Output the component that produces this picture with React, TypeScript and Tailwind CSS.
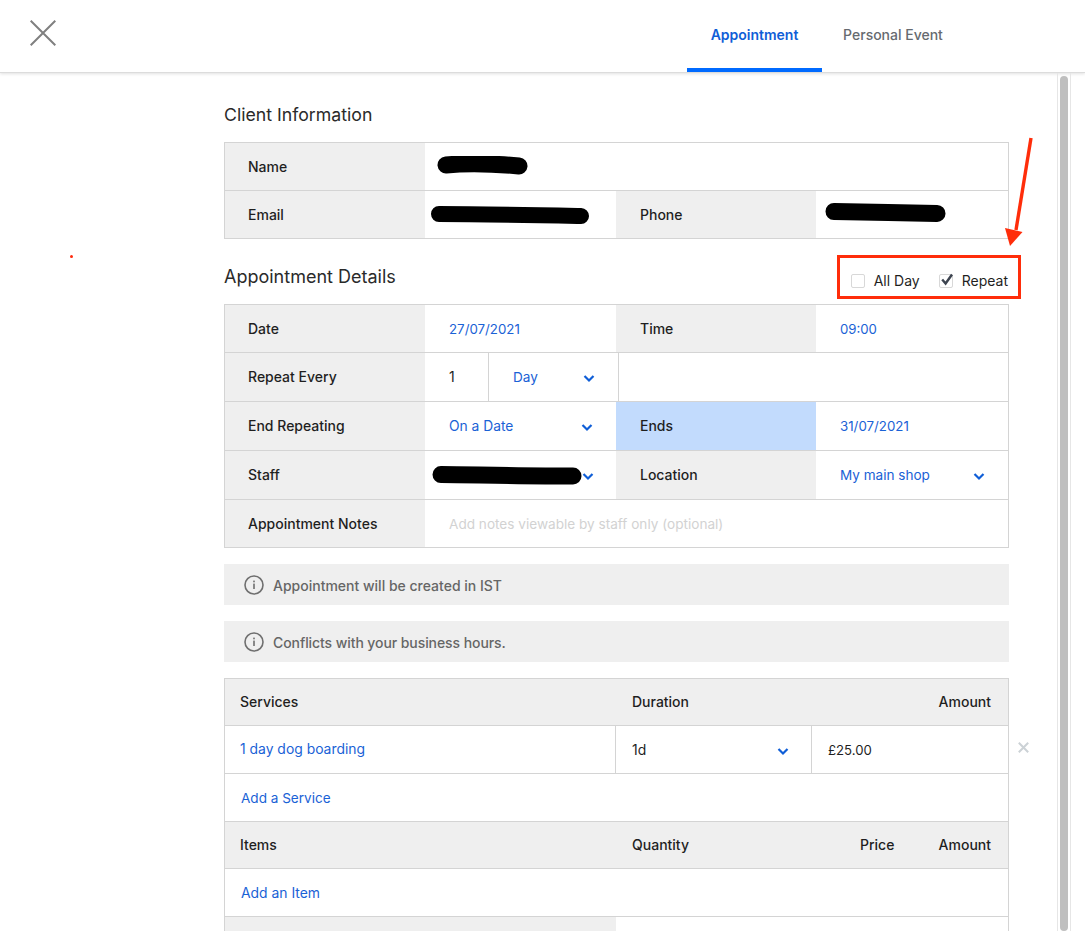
import React from "react";

const Chevron = () => (
  <svg width="12" height="8" viewBox="0 0 12 8" fill="none" className="shrink-0 translate-y-[1.5px]">
    <path d="M1.5 1.5 L6 6 L10.5 1.5" stroke="#0f5ed7" strokeWidth="2.2" />
  </svg>
);

const Label = ({ children, className = "" }: { children: React.ReactNode; className?: string }) => (
  <div className={`flex items-center bg-[#efefef] pl-[23px] font-medium text-[#1f1f1f] ${className}`}>{children}</div>
);

const Value = ({ children, className = "" }: { children: React.ReactNode; className?: string }) => (
  <div className={`flex items-center pl-6 text-[#1a62d6] ${className}`}>{children}</div>
);

const Redact = ({ w, h, d, className = "" }: { w: number; h: number; d: string; className?: string }) => (
  <svg width={w} height={h} viewBox={`0 0 ${w} ${h}`} fill="none" className={`shrink-0 ${className}`}>
    <path d={d} stroke="#000" strokeWidth={h - 2} strokeLinecap="round" />
  </svg>
);

const Info = () => (
  <svg width="20" height="20" viewBox="0 0 20 20" fill="none" className="shrink-0">
    <circle cx="10" cy="10" r="9" stroke="#6f6f6f" strokeWidth="1.6" />
    <rect x="9.2" y="8.6" width="1.6" height="5.4" fill="#6f6f6f" />
    <rect x="9.2" y="5.6" width="1.6" height="1.7" fill="#6f6f6f" />
  </svg>
);

const Banner = ({ children, className = "" }: { children: React.ReactNode; className?: string }) => (
  <div className="flex h-[41px] items-center gap-[9px] bg-[#efefef] pl-5 font-medium text-[#666666]">
    <Info />
    <span className={`pt-0.5 ${className}`}>{children}</span>
  </div>
);

const Rule = "border-b border-[#d4d4d4]";

export default function App() {
  return (
    <div
      className="relative h-[931px] w-[1085px] overflow-hidden bg-white text-[14px] text-[#1f1f1f]"
      style={{ fontFamily: 'Inter, "Liberation Sans", sans-serif' }}
    >
      <header className="flex h-[73px] items-stretch border-b border-[#dcdcdc] shadow-[0_1px_3px_rgba(0,0,0,0.12)]">
        <div className="flex w-[687px] items-start pl-[30px] pt-[20px]">
          <svg width="26" height="26" viewBox="0 0 26 26" fill="none">
            <path d="M0.7 0.7 L25.3 25.3 M25.3 0.7 L0.7 25.3" stroke="#808080" strokeWidth="2" />
          </svg>
        </div>
        <div className="flex h-[72px] w-[135px] items-center justify-center border-b-4 border-[#006aff] font-semibold text-[#0f5ed7]">
          Appointment
        </div>
        <div className="flex h-[68px] w-[142px] items-center justify-center font-medium text-[#666a70]">
          Personal Event
        </div>
      </header>

      <div className="flex h-[858px]">
        <main className="ml-[224px] w-[785px] shrink-0">
          <h2 className="flex h-[69px] items-end pb-[15px] text-[17.7px] leading-6 text-[#2a2a2a]">Client Information</h2>
          <div className="border border-[#d4d4d4]">
            <div className={`grid h-[48px] grid-cols-[200px_1fr] ${Rule}`}>
              <Label>Name</Label>
              <Value className="pl-[12px]">
                <Redact w={91} h={19} d="M9 9 C 30 7, 60 8, 82 10" className="mb-[2px]" />
              </Value>
            </div>
            <div className="grid h-[47px] grid-cols-[200px_191px_200px_1fr]">
              <Label>Email</Label>
              <Value className="pl-[5px]">
                <Redact w={160} h={18} d="M9 8 C 50 8, 100 9, 151 10" />
              </Value>
              <Label className="pl-[24px]">Phone</Label>
              <Value className="pl-[9px]">
                <Redact w={121} h={19} d="M9 8.5 C 40 9, 80 10, 112 10.5" className="mb-[4px]" />
              </Value>
            </div>
          </div>

          <div className="flex h-[65px] items-end justify-between pb-[15px]">
            <h2 className="text-[18px] leading-6 text-[#2a2a2a]">Appointment Details</h2>
            <div className="-mb-[2px] mr-px flex items-center">
              <span className="mr-[9px] h-[14px] w-[14px] rounded-[2px] border border-[#d8d8d8]" />
              <span className="mr-[19px]">All Day</span>
              <span className="relative mr-[9px] h-[14px] w-[14px] rounded-[2px] border border-[#d8d8d8]">
                <svg width="14" height="15" viewBox="0 0 14 15" fill="none" className="absolute -top-[3px] left-0">
                  <path d="M2.2 7.5 L5.6 11.5 L12 2.5" stroke="#3d4450" strokeWidth="2.4" />
                </svg>
              </span>
              <span>Repeat</span>
            </div>
          </div>

          <div className="border border-[#d4d4d4]">
            <div className={`grid h-[48px] grid-cols-[200px_191px_200px_1fr] ${Rule}`}>
              <Label>Date</Label>
              <Value className="pt-0.5 text-[13.3px]">27/07/2021</Value>
              <Label className="pl-[24px]">Time</Label>
              <Value className="pt-0.5 text-[13.2px]">09:00</Value>
            </div>
            <div className={`grid h-[49px] grid-cols-[200px_64px_130px_1fr] ${Rule}`}>
              <Label className="pb-0.5">Repeat Every</Label>
              <div className="flex items-center border-r border-[#d4d4d4] pb-0.5 pl-6">1</div>
              <div className="flex items-center justify-between border-r border-[#d4d4d4] pl-6 pr-[23px] text-[13.6px] text-[#1a62d6]">
                Day <Chevron />
              </div>
              <div />
            </div>
            <div className="grid h-[49px] grid-cols-[200px_191px_200px_1fr] border-b border-[#d4d4d4]">
              <Label className="pb-0.5">End Repeating</Label>
              <Value className="justify-between pr-[23px] text-[13.8px]">
                On a Date <Chevron />
              </Value>
              <Label className="!bg-[#c2dbfd] pb-0.5 pl-[24px]">Ends</Label>
              <Value className="pt-0.5 text-[13.3px]">31/07/2021</Value>
            </div>
            <div className={`grid h-[49px] grid-cols-[200px_191px_200px_1fr] ${Rule}`}>
              <Label className="pb-0.5">Staff</Label>
              <Value className="justify-between pl-[7px] pr-[23px]">
                <Redact w={150} h={19} d="M9 8.5 C 50 9, 100 10, 141 10" />
                <Chevron />
              </Value>
              <Label className="pb-0.5 pl-[24px]">Location</Label>
              <Value className="justify-between pr-[23px] text-[13.55px]">
                My main shop <Chevron />
              </Value>
            </div>
            <div className="grid h-[47px] grid-cols-[200px_1fr]">
              <Label>Appointment Notes</Label>
              <Value className="pt-0.5 text-[13.6px] !text-[#d2d2d2]">Add notes viewable by staff only (optional)</Value>
            </div>
          </div>

          <div className="mt-4 flex flex-col gap-4">
            <Banner>Appointment will be created in IST</Banner>
            <Banner className="tracking-[-0.08px]">Conflicts with your business hours.</Banner>
          </div>

          <div className="mt-4 border border-[#d4d4d4]">
            <div className={`flex h-[47px] items-center bg-[#efefef] pb-0.5 pl-[15px] pr-[17px] font-medium ${Rule}`}>
              <span className="w-[392px]">Services</span>
              <span className="flex-1">Duration</span>
              <span>Amount</span>
            </div>
            <div className={`relative grid h-[48px] grid-cols-[390px_197px_1fr] ${Rule}`}>
              <div className="flex items-center pb-px pl-[15px] text-[13.9px] text-[#1a62d6]">1 day dog boarding</div>
              <div className="flex items-center justify-between border-x border-[#d4d4d4] pl-4 pr-[22px]">
                1d <Chevron />
              </div>
              <div className="flex items-center pl-4 pt-0.5 text-[13.2px]">£25.00</div>
              <svg width="11" height="11" viewBox="0 0 11 11" fill="none" className="absolute -right-[21px] top-[16px]">
                <path d="M0.8 0.8 L10.2 10.2 M10.2 0.8 L0.8 10.2" stroke="#ccd2d6" strokeWidth="2" />
              </svg>
            </div>
            <div className={`flex h-[48px] items-center pl-4 pt-0.5 text-[13.55px] text-[#1a62d6] ${Rule}`}>Add a Service</div>
            <div className={`flex h-[47px] items-center bg-[#efefef] pb-0.5 pl-[15px] pr-[17px] font-medium ${Rule}`}>
              <span className="w-[392px]">Items</span>
              <span className="w-[228px]">Quantity</span>
              <span className="flex-1">Price</span>
              <span>Amount</span>
            </div>
            <div className={`flex h-[48px] items-center pl-4 pt-0.5 text-[13.9px] text-[#1a62d6] ${Rule}`}>Add an Item</div>
            <div className="grid h-[48px] grid-cols-[391px_1fr]">
              <div className="bg-[#efefef]" />
              <div />
            </div>
          </div>
        </main>

        <div className="ml-[48px] flex h-full w-[14px] shrink-0 justify-center border-x border-[#e6e6e6] pt-[3px]">
          <div className="h-full w-2 rounded-full bg-[#bfbfbf]" />
        </div>
      </div>

      <span className="absolute left-[69.5px] top-[254.5px] h-[3px] w-[3px] rounded-full bg-[#ff2a0d]" />
      <div className="absolute left-[837px] top-[255px] h-[44px] w-[184px] border-[3px] border-[#ff2d0a]" />
      <svg width="40" height="115" viewBox="0 0 40 115" fill="none" className="absolute left-[1000px] top-[135px]">
        <path d="M31 3 L16 95" stroke="#ff2d0a" strokeWidth="3.4" />
        <path d="M5 93 L22.5 97 L10 111 Z" fill="#ff2d0a" />
      </svg>
    </div>
  );
}
